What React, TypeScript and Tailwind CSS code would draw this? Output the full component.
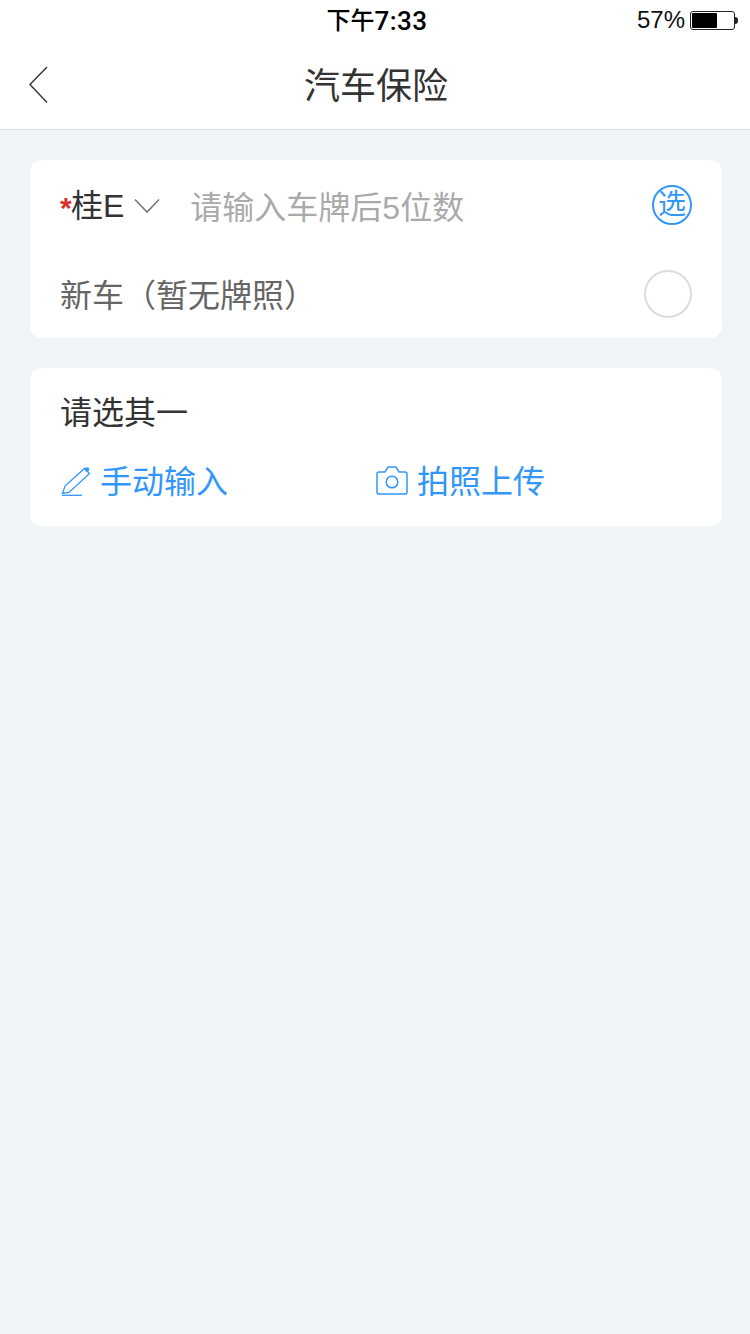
const cjk = "font-['Liberation_Sans','Noto_Sans_CJK_SC',sans-serif]";

function Battery() {
  return (
    <div className="flex items-center">
      <div className="w-[45px] h-[19px] rounded-[3px] border border-[#222] p-[1px] flex">
        <div className="w-[25px] bg-black rounded-[1px]" />
      </div>
      <div className="w-[3px] h-[7px] bg-[#222] rounded-r-full" />
    </div>
  );
}

function BackIcon() {
  return (
    <svg width="20" height="38" viewBox="0 0 20 38" fill="none">
      <path d="M19 1L2 18.5L19 36.5" stroke="#333" strokeWidth="1.4" />
    </svg>
  );
}

function PenIcon() {
  return (
    <svg width="32" height="32" viewBox="0 0 32 32" fill="none" stroke="#3296fa" strokeWidth="1.3">
      <path d="M2.5 27.5L5 20L24.5 2.5L29.5 7.5L9 26.5L2.5 27.5Z" />
      <path d="M2 29.3H22" />
      <circle cx="27" cy="3.5" r="2.2" fill="#3296fa" stroke="none" />
    </svg>
  );
}

function CameraIcon() {
  return (
    <svg width="32" height="32" viewBox="0 0 32 32" fill="none" stroke="#3296fa" strokeWidth="1.5">
      <path d="M3 6H9L11.5 2Q12 1 13 1H19Q20 1 20.5 2L23 6H29Q31 6 31 8V26Q31 28 29 28H3Q1 28 1 26V8Q1 6 3 6Z" />
      <circle cx="16" cy="16" r="5.8" />
    </svg>
  );
}

export default function App() {
  return (
    <div className={`w-[750px] h-[1334px] bg-[#f0f5f8] flex flex-col ${cjk}`}>
      {/* status bar */}
      <div className="h-10 bg-white relative flex items-center justify-center pl-1 pt-[2px]">
        <span className="text-[24px] leading-10 font-medium text-black">下午</span>
        <span className="text-[26px] leading-10 font-medium tracking-[0.5px] text-black font-['Roboto',sans-serif]">7:33</span>
        <div className="absolute right-[12px] top-0 h-10 flex items-center gap-[5px]">
          <span className="text-[24px] text-[#111] leading-10">57%</span>
          <Battery />
        </div>
      </div>

      {/* nav */}
      <div className="h-[90px] bg-white border-b border-[#dfe1e4] flex items-center justify-center relative">
        <div className="absolute left-[28px] top-[26px]">
          <BackIcon />
        </div>
        <h1 className="text-[36px] text-[#333] font-normal pt-1 pl-[2px]">汽车保险</h1>
      </div>

      <div className="px-[30px] pr-[28px] pt-[30px] flex flex-col gap-[30px]">
        {/* plate card */}
        <div className="bg-white rounded-[12px] h-[178px] px-[30px] flex flex-col">
          <div className="h-[92px] flex items-center">
            <span className="w-[11px] text-[30px] font-bold text-[#d9302c] leading-none mt-1">*</span>
            <span className="text-[32px] text-[#333]">桂E</span>
            <svg className="ml-[10px]" width="26" height="16" viewBox="0 0 26 16" fill="none">
              <path d="M1 1.5L13 14L25 1.5" stroke="#777" strokeWidth="1.6" />
            </svg>
            <span className="ml-[30px] mt-1 text-[32px] text-[#aaa]">请输入车牌后5位数</span>
            <div className="ml-auto mt-[-2px] w-10 h-10 rounded-full border-2 border-[#3296fa] flex items-center justify-center text-[28px] leading-none text-[#3296fa]">
              选
            </div>
          </div>
          <div className="flex-1 flex items-center justify-between">
            <span className="text-[32px] text-[#666] mt-[2px]">新车（暂无牌照）</span>
            <div className="w-12 h-12 rounded-full border-2 border-[#dcdcdc] mt-[-2px]" />
          </div>
        </div>

        {/* method card */}
        <div className="bg-white rounded-[12px] h-[158px] px-[30px] flex flex-col">
          <div className="h-[90px] flex items-center">
            <span className="text-[32px] text-[#333]">请选其一</span>
          </div>
          <div className="flex items-center">
            <div className="w-[316px] flex items-center gap-2">
              <PenIcon />
              <span className="text-[32px] text-[#3296fa]">手动输入</span>
            </div>
            <div className="flex items-center gap-[9px]">
              <CameraIcon />
              <span className="text-[32px] text-[#3296fa]">拍照上传</span>
            </div>
          </div>
        </div>
      </div>
    </div>
  );
}
